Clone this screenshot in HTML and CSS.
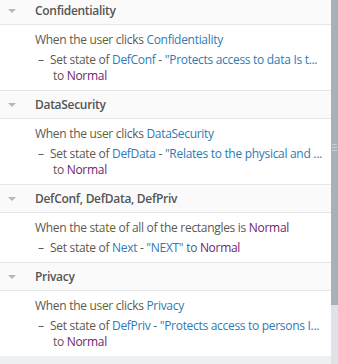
FILE: index.html
```html
<!DOCTYPE html>
<html lang="en">
<head>
    <meta charset="UTF-8">
    <title>Interactions</title>
    <link rel="stylesheet" href="styles.css">
</head>
<body>
    <div class="panel">
        <div class="list">
            <div class="group">
                <div class="group-header"><span class="caret"></span><span class="title">Confidentiality</span></div>
                <div class="group-body">
                    <div class="when">When the <span class="kw">user</span> clicks <span class="ref">Confidentiality</span></div>
                    <ul class="actions">
                        <li><span class="dash">–</span><span class="step">Set state of <span class="ref">DefConf</span> - <span class="ref">"Protects access to data Is t...</span></span> to <span class="val">Normal</span></li>
                    </ul>
                </div>
            </div>

            <div class="group">
                <div class="group-header"><span class="caret"></span><span class="title">DataSecurity</span></div>
                <div class="group-body">
                    <div class="when">When the <span class="kw">user</span> clicks <span class="ref">DataSecurity</span></div>
                    <ul class="actions">
                        <li><span class="dash">–</span><span class="step">Set state of <span class="ref">DefData</span> - <span class="ref">"Relates to the physical and ...</span></span> to <span class="val">Normal</span></li>
                    </ul>
                </div>
            </div>

            <div class="group">
                <div class="group-header"><span class="caret"></span><span class="title">DefConf, DefData, DefPriv</span></div>
                <div class="group-body">
                    <div class="when">When the <span class="kw">state</span> of all of the rectangles is <span class="val">Normal</span></div>
                    <ul class="actions">
                        <li><span class="dash">–</span><span class="step">Set state of <span class="ref">Next</span> - <span class="ref">"NEXT"</span></span> to <span class="val">Normal</span></li>
                    </ul>
                </div>
            </div>

            <div class="group">
                <div class="group-header"><span class="caret"></span><span class="title">Privacy</span></div>
                <div class="group-body">
                    <div class="when">When the <span class="kw">user</span> clicks <span class="ref">Privacy</span></div>
                    <ul class="actions">
                        <li><span class="dash">–</span><span class="step">Set state of <span class="ref">DefPriv</span> - <span class="ref">"Protects access to persons I...</span></span> to <span class="val">Normal</span></li>
                    </ul>
                </div>
            </div>
        </div>

        <div class="scrollbar">
            <div class="thumb"><span class="grip"></span></div>
            <div class="track"></div>
        </div>
    </div>
</body>
</html>
```

FILE: styles.css
```css
:root {
    --text-color: #5a5a52;
    --title-color: #555555;
    --link-color: #2d7bb5;
    --value-color: #6e2470;
    --keyword-color: #66661c;
    --line-color: #e4e6e8;
}

html, body {
    margin: 0;
    height: 100%;
    overflow: hidden;
}

body {
    font-family: 'Open Sans', 'Noto Sans', sans-serif;
    font-size: 12px;
    letter-spacing: -0.3px;
    color: var(--text-color);
    background: #eef1f3;
}

.panel {
    display: flex;
    height: 100%;
}

.list {
    flex: 1;
    margin-top: -4px;
}

.group-header {
    display: flex;
    align-items: center;
    height: 27px;
    background: #fafafa;
    border-top: 1px solid var(--line-color);
    border-bottom: 1px solid var(--line-color);
}

.caret {
    width: 0;
    height: 0;
    margin: 0 19px 0 8px;
    border-left: 4px solid transparent;
    border-right: 4px solid transparent;
    border-top: 4px solid #b4b8bc;
}

.title {
    font-size: 12px;
    font-weight: 600;
    color: var(--title-color);
}

.group-body {
    background: white;
    padding: 6px 6px 6px 35px;
}

.when {
    line-height: 18px;
    white-space: nowrap;
}

.actions {
    list-style: none;
    margin: 3px 0 0;
    padding: 0;
}

.actions li {
    line-height: 16px;
    padding-left: 18px;
    text-indent: -15px;
}

.dash {
    display: inline-block;
    width: 12px;
    text-indent: 0;
}

.step {
    white-space: nowrap;
}

.ref {
    color: var(--link-color);
}

.val {
    color: var(--value-color);
}

.kw {
    color: var(--keyword-color);
}

.scrollbar {
    width: 9px;
    display: flex;
    flex-direction: column;
}

.thumb {
    height: 305px;
    background: #a9b1b8;
    display: flex;
    justify-content: center;
    padding-top: 144px;
    box-sizing: border-box;
}

.grip {
    width: 5px;
    height: 5px;
    border-top: 1px solid #c9ced3;
    border-bottom: 1px solid #c9ced3;
    background: linear-gradient(#c9ced3, #c9ced3) center / 100% 1px no-repeat;
}

.track {
    flex: 1;
    background: #dfe3e7;
}
```
